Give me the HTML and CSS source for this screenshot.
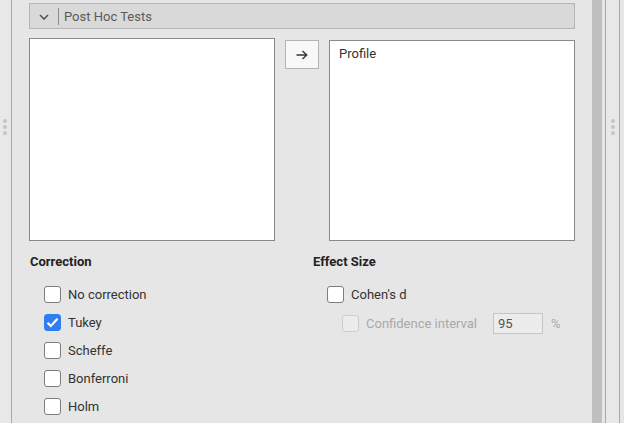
FILE: index.html
```html
<!DOCTYPE html>
<html>
<head>
<meta charset="utf-8">
<link rel="stylesheet" href="styles.css">
</head>
<body>
<div class="app">
  <div class="lstrip"><div class="grip"><i></i><i></i><i></i></div></div>
  <div class="panel">
    <div class="section-head">
      <span class="chev"><svg width="10" height="6" viewBox="0 0 10 6"><path d="M1 1 L5 5 L9 1" fill="none" stroke="#555" stroke-width="1.6"/></svg></span>
      <span class="sep"></span>
      <span class="title">Post Hoc Tests</span>
    </div>
    <div class="lists">
      <div class="listbox left"></div>
      <div class="btncol">
        <div class="arrow-btn"><svg width="12" height="10" viewBox="0 0 12 10"><path d="M0.5 5 H10.5 M6.5 1 L10.8 5 L6.5 9" fill="none" stroke="#333" stroke-width="1.3"/></svg></div>
      </div>
      <div class="listbox right"><div class="item">Profile</div></div>
    </div>
    <div class="options">
      <div class="col">
        <div class="head">Correction</div>
        <div class="checks">
          <label class="cb"><span class="box"></span>No correction</label>
          <label class="cb"><span class="box on"><svg width="13" height="11" viewBox="0 0 13 11"><path d="M1.5 5.8 L4.8 9 L11.5 1.8" fill="none" stroke="#fff" stroke-width="2.2"/></svg></span>Tukey</label>
          <label class="cb"><span class="box"></span>Scheffe</label>
          <label class="cb"><span class="box"></span>Bonferroni</label>
          <label class="cb"><span class="box"></span>Holm</label>
        </div>
      </div>
      <div class="col col2">
        <div class="head">Effect Size</div>
        <div class="checks">
          <label class="cb"><span class="box"></span>Cohen's d</label>
          <div class="sub">
            <label class="cb disabled"><span class="box"></span>Confidence interval</label>
            <span class="num">95</span>
            <span class="pct">%</span>
          </div>
        </div>
      </div>
    </div>
  </div>
  <div class="scrollbar"></div>
  <div class="rstrip"><div class="grip"><i></i><i></i><i></i></div></div>
</div>
</body>
</html>
```

FILE: styles.css
```css
html, body {
  margin: 0;
  padding: 0;
}
body {
  width: 624px;
  height: 423px;
  overflow: hidden;
  background: #e6e6e6;
  font-family: Roboto, "Liberation Sans", sans-serif;
  color: #333;
}
.app {
  display: flex;
  height: 423px;
}
.lstrip {
  width: 11px;
  flex-shrink: 0;
  border-right: 1px solid #a8a8a8;
  background: #e8e8e8;
  display: flex;
  flex-direction: column;
  align-items: center;
  justify-content: center;
}
.grip {
  display: flex;
  flex-direction: column;
  gap: 2px;
  margin-top: -169px;
}
.grip i {
  display: block;
  width: 4px;
  height: 4px;
  border-radius: 50%;
  background: #c4c4c4;
}
.lstrip .grip { margin-left: -2px; }
.panel {
  width: 546px;
  flex-shrink: 0;
  padding: 3px 17px 0 17px;
  background: #e6e6e6;
}
.section-head {
  height: 24px;
  border: 1px solid #b5b5b5;
  background: #d9d9d9;
  display: flex;
  align-items: center;
}
.chev {
  width: 28px;
  display: flex;
  justify-content: center;
  padding-top: 1px;
}
.sep {
  width: 1px;
  height: 17px;
  background: #8a8a8a;
}
.title {
  margin-left: 5px;
  font-size: 13px;
  color: #5a5a5a;
}
.lists {
  display: flex;
  margin-top: 9px;
  gap: 10px;
}
.listbox {
  flex-shrink: 0;
  background: #fff;
  border: 1px solid #8a8a8a;
  box-sizing: border-box;
}
.listbox.left {
  width: 246px;
  height: 203px;
}
.listbox.right {
  width: 246px;
  height: 201px;
  margin-top: 2px;
}
.btncol {
  flex-shrink: 0;
  padding-top: 2px;
}
.arrow-btn {
  width: 34px;
  height: 29px;
  box-sizing: border-box;
  border: 1px solid #b4b4b4;
  background: #f8f8f8;
  display: flex;
  align-items: center;
  justify-content: center;
}
.item {
  font-size: 13px;
  color: #333;
  padding: 5px 0 0 9px;
}
.options {
  display: flex;
  margin-top: 13px;
}
.col {
  width: 283px;
  flex-shrink: 0;
  padding-left: 1px;
}
.col2 {
  width: auto;
  flex: 1;
  padding-left: 0;
}
.head {
  font-size: 13px;
  font-weight: bold;
  color: #222;
  height: 16px;
}
.checks {
  padding-left: 14px;
  padding-top: 15px;
  display: flex;
  flex-direction: column;
  gap: 10px;
}
.cb {
  display: flex;
  align-items: center;
  height: 18px;
  font-size: 13px;
  color: #333;
}
.box {
  width: 15px;
  height: 15px;
  border: 1px solid #7d7d7d;
  border-radius: 3px;
  background: #fff;
  margin-right: 7px;
  display: flex;
  align-items: center;
  justify-content: center;
}
.box.on {
  background: #2f7ff2;
  border-color: #2f7ff2;
}
.sub {
  display: flex;
  align-items: center;
  padding-left: 15px;
}
.cb.disabled { color: #a9a9a9; }
.cb.disabled .box {
  background: #ececec;
  border-color: #cccccc;
}
.num {
  margin-left: 16px;
  width: 48px;
  height: 19px;
  border: 1px solid #c6c6c6;
  background: #ececec;
  font-size: 13px;
  color: #555;
  display: flex;
  align-items: center;
  text-indent: 4px;
}
.pct {
  margin-left: 8px;
  font-size: 13px;
  color: #aaa;
}
.scrollbar {
  width: 10px;
  flex-shrink: 0;
  background: #bfbfbf;
}
.rstrip {
  width: 13px;
  flex-shrink: 0;
  margin-left: 3px;
  border-left: 1px solid #a8a8a8;
  border-right: 1px solid #a8a8a8;
  background: #e8e8e8;
  display: flex;
  flex-direction: column;
  align-items: center;
  justify-content: center;
}
```
